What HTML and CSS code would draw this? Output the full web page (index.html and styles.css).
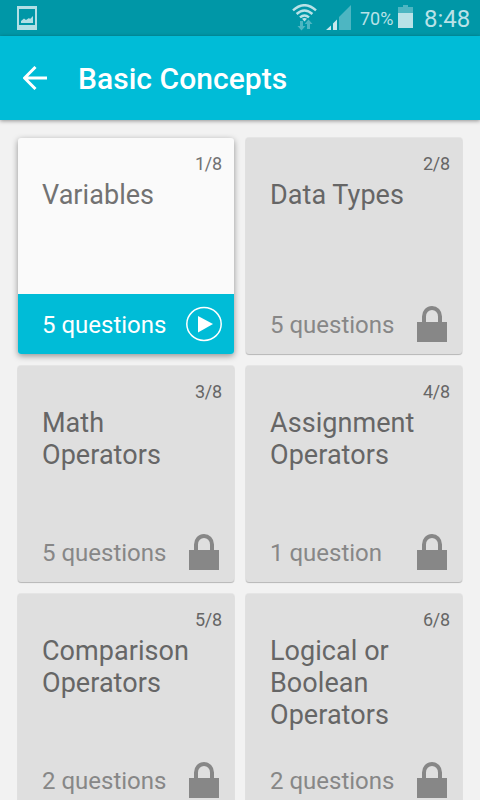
FILE: index.html
```
<!DOCTYPE html>
<html lang="en">
<head>
<meta charset="utf-8">
<title>Basic Concepts</title>
<link rel="stylesheet" href="styles.css">
</head>
<body>
<svg class="defs" aria-hidden="true">
  <symbol id="lock" viewBox="0 0 30 36">
    <path d="M0 16H30V36H0Z" fill="#878787"/>
    <path d="M7 17V10.500a8 8.500 0 0 1 16 0V17" fill="none" stroke="#878787" stroke-width="4"/>
  </symbol>
</svg>
<div class="screen">
  <header class="status">
    <svg class="picture" width="20" height="24" viewBox="0 0 20 24">
      <path d="M0 0H20V24H0ZM2 3V19H18V3Z" fill="#b2dfe5" fill-rule="evenodd"/>
      <path d="M4 17V15L7 12.500 9 14 12 12 13 13 16 10V17Z" fill="#b2dfe5"/>
    </svg>
    <svg class="wifi" width="26" height="28" viewBox="0 0 26 28">
      <g fill="none" stroke="#b9e2e7" stroke-width="2.400">
        <path d="M1 6.400Q12.500-4 24 6.400"/>
        <path d="M4.600 10Q12.500 2.800 20.400 10"/>
        <path d="M8 13.400Q12.500 9.400 17 13.400"/>
      </g>
      <path d="M10 14.800Q12.500 13 15 14.800L12.500 17.500Z" fill="#b9e2e7"/>
      <path d="M8 17H11V22H13.500L9.500 26.500 5.500 22H8ZM15 25V20H12.700L16.500 15.500 20.500 20H18V25Z" fill="#4db6c2"/>
    </svg>
    <svg class="signal" width="25" height="25" viewBox="0 0 25 25">
      <path d="M13 12L25 0V25H13Z" fill="#4db6c2"/>
      <path d="M0 25L5 20.500V25ZM7 18.500L11 14.500V25H7Z" fill="#c8e8ec"/>
    </svg>
    <span class="percent">70%</span>
    <svg class="battery" width="15" height="23" viewBox="0 0 15 23">
      <path d="M0 2H5V0H10V2H15V8H0Z" fill="#4db6c2"/>
      <path d="M0 8H15V23H0Z" fill="#b9e2e7"/>
    </svg>
    <span class="clock">8:48</span>
  </header>
  <nav class="toolbar">
    <svg class="back" width="24" height="24" viewBox="0 0 24 24">
      <path d="M24 12H2M12.500 1L1.500 12 12.500 23" fill="none" stroke="#fff" stroke-width="3"/>
    </svg>
    <h1>Basic Concepts</h1>
  </nav>
  <main class="grid">
    <article class="card active">
      <span class="count">1/8</span>
      <h2>Variables</h2>
      <footer><span>5 questions</span>
        <svg class="play" width="36" height="36" viewBox="0 0 36 36">
          <ellipse cx="18" cy="18" rx="17.200" ry="16.400" fill="none" stroke="#fff" stroke-width="1.500"/>
          <path d="M12 10L27 18 12 26.500Z" fill="#fff"/>
        </svg>
      </footer>
    </article>
    <article class="card">
      <span class="count">2/8</span>
      <h2>Data Types</h2>
      <footer><span>5 questions</span><svg class="lock"><use href="#lock"/></svg></footer>
    </article>
    <article class="card">
      <span class="count">3/8</span>
      <h2>Math Operators</h2>
      <footer><span>5 questions</span><svg class="lock"><use href="#lock"/></svg></footer>
    </article>
    <article class="card">
      <span class="count">4/8</span>
      <h2>Assignment Operators</h2>
      <footer><span>1 question</span><svg class="lock"><use href="#lock"/></svg></footer>
    </article>
    <article class="card">
      <span class="count">5/8</span>
      <h2>Comparison Operators</h2>
      <footer><span>2 questions</span><svg class="lock"><use href="#lock"/></svg></footer>
    </article>
    <article class="card">
      <span class="count">6/8</span>
      <h2>Logical or Boolean Operators</h2>
      <footer><span>2 questions</span><svg class="lock"><use href="#lock"/></svg></footer>
    </article>
  </main>
</div>
</body>
</html>
```
FILE: styles.css
```
* { box-sizing: border-box; }
body { margin: 0; font-family: Roboto, sans-serif; }
svg { display: block; flex: none; }
.defs { display: none; }
h1, h2 { margin: 0; }
.screen {
  display: flex;
  flex-direction: column;
  width: 480px;
  height: 800px;
  overflow: hidden;
  background: #f2f2f2;
}
.status {
  display: flex;
  flex: none;
  align-items: flex-start;
  height: 36px;
  padding-left: 17px;
  background: #0097a7;
  color: #b9e2e7;
}
.picture { margin-top: 6px; }
.wifi { margin: 4px 0 0 255px; }
.signal { margin: 5px 0 0 8px; }
.percent { width: 38px; margin-left: 9px; font-size: 18px; line-height: 38px; }
.battery { margin-top: 5px; }
.clock { margin-left: 11px; font-size: 24px; line-height: 38px; }
.toolbar {
  display: flex;
  flex: none;
  align-items: center;
  height: 84px;
  padding: 0 0 1px 23px;
  background: #00bcd7;
  box-shadow: 0 1px 4px rgba(0, 0, 0, .4);
}
h1 {
  margin: 1px 0 0 31px;
  color: #fff;
  font-size: 30px;
  font-weight: 500;
  letter-spacing: .04px;
}
.grid {
  display: grid;
  grid-template-columns: 216px 216px;
  grid-auto-rows: 216px;
  gap: 12px;
  padding: 18px;
}
.card {
  display: flex;
  flex-direction: column;
  border-radius: 3px;
  background: #dfdfdf;
  box-shadow: 0 0 0 1px rgba(0, 0, 0, .05), 0 1px 1px rgba(0, 0, 0, .2);
  color: #666;
}
.count {
  padding: 15px 12px 0 0;
  font-size: 18px;
  line-height: 21px;
  letter-spacing: -.2px;
  text-align: right;
}
h2 {
  padding: 5px 24px 0;
  font-size: 27px;
  font-weight: 400;
  line-height: 32px;
  letter-spacing: .05px;
}
.card footer {
  display: flex;
  justify-content: space-between;
  align-items: center;
  height: 60px;
  margin-top: auto;
  padding: 2px 15px 0 24px;
  border-radius: 0 0 3px 3px;
  color: #878787;
  font-size: 24px;
}
.lock { width: 30px; height: 36px; margin-top: -2px; }
.active {
  background: #fafafa;
  box-shadow: 0 2px 6px rgba(0, 0, 0, .4);
  color: #727272;
}
.card.active footer {
  padding-right: 12px;
  background: #00bcd7;
  color: #fff;
}
.play { margin-top: -2px; }
```
